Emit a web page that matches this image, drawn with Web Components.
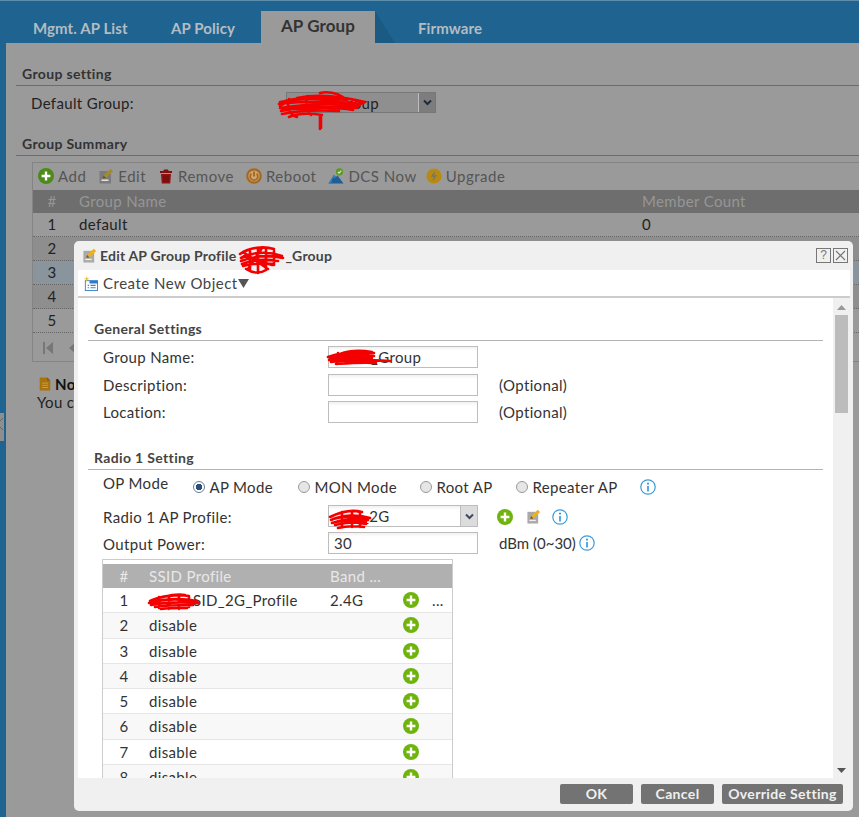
<!DOCTYPE html>
<html>
<head>
<meta charset="utf-8">
<title>AP Group</title>
<style>
	html, body { margin: 0; padding: 0; }
	body { font: 15px/20px Lato, "Open Sans", sans-serif; letter-spacing: .35px; color: #333; }
</style>
</head>
<body>
<ap-page>
	<ap-tabs></ap-tabs>
	<ap-panel>
		<ap-heading dim style="margin-top:21px">Group setting</ap-heading>
		<ap-default-group></ap-default-group>
		<ap-heading dim style="margin-top:15px">Group Summary</ap-heading>
		<ap-summary></ap-summary>
		<ap-note></ap-note>
	</ap-panel>

	<ap-modal title-a="Edit AP Group Profile" title-b="_Group">
		<ap-heading style="margin-top:22px">General Settings</ap-heading>
		<ap-form-row label="Group Name:" top="5"><ap-field pad="37">_Group</ap-field></ap-form-row>
		<ap-form-row label="Description:" top="6"><ap-field></ap-field><span slot="after">(Optional)</span></ap-form-row>
		<ap-form-row label="Location:" top="5"><ap-field></ap-field><span slot="after">(Optional)</span></ap-form-row>
		<ap-heading style="margin-top:26px">Radio 1 Setting</ap-heading>
		<ap-op-mode></ap-op-mode>
		<ap-form-row label="Radio 1 AP Profile:" top="7" shift="2">
			<ap-field select pad="28">_2G</ap-field>
			<span slot="after" style="display:flex;align-items:center;gap:13px;margin:1px 0 0 19px"><ap-icon name="plus" size="16"></ap-icon><ap-icon name="edit" size="15"></ap-icon><ap-icon name="info" size="16" style="margin-left:-2px"></ap-icon></span>
		</ap-form-row>
		<ap-form-row label="Output Power:" top="5" shift="1">
			<ap-field>30</ap-field>
			<span slot="after" style="display:flex;align-items:center;gap:3px;letter-spacing:0">dBm (0~30)<ap-icon name="info" size="16"></ap-icon></span>
		</ap-form-row>
		<ap-ssid-table></ap-ssid-table>
	</ap-modal>

	<ap-scribble x="277" y="88" w="90" h="42" d="M3 17C15 9 34 5 60 8M3 13C20 10 40 8 62 13C74 15 86 15 88 13C70 9 45 4 20 9M2 15C25 12 60 12 84 15M3 19C30 15 60 14 82 17M4 22C25 18 55 17 80 19M5 25C25 21 42 21 62 22M12 28C22 24 32 24 45 26M43 4C50 2 60 4 66 8M43 26V40M12 10C10 18 12 26 20 28M30 7C28 16 30 22 34 26M5 21C30 19 60 18 76 21M8 12C30 7 50 9 70 11M44 26V39"></ap-scribble>
	<ap-scribble x="238" y="244" w="48" h="31" d="M2 9C12 2 26 1 36 4M3 13C14 7 30 6 44 11M3 16C16 11 32 10 45 13M4 19C14 15 28 14 40 16M5 21C12 19 24 18 36 19M8 24C14 28 22 29 28 25M12 6V26M20 4V28M28 3V25M36 6V20M5 7L30 24M6 11L34 20M24 3L10 24"></ap-scribble>
	<ap-scribble x="326" y="347" w="66" h="19" d="M2 9C14 5 30 3 48 5M3 12C18 8 34 7 46 9M5 14C22 11 44 12 64 13M10 16C24 15 36 14 50 15M14 6C22 3 34 2 46 4M4 10C20 6 36 6 48 8M8 12C22 10 34 10 46 11M12 5V15M22 4V15M32 4V15M42 4V15"></ap-scribble>
	<ap-scribble x="328" y="506" w="44" h="23" d="M2 10C12 5 24 2 34 5M3 13C14 8 30 7 42 11M4 16C16 12 30 11 40 13M7 18C18 15 30 15 38 17M10 21C18 19 28 19 36 20M9 7C18 4 26 3 32 5M5 12C16 9 28 9 38 11M8 15C18 13 28 13 38 15M14 5V20M24 4V20M32 5V20"></ap-scribble>
	<ap-scribble x="147" y="591" w="54" h="20" d="M3 9C14 4 30 2 42 4M2 11C16 7 34 6 50 9M4 13C18 10 36 10 52 11M8 15C20 13 34 13 46 13M14 17C22 16 32 16 40 16M16 5C24 3 32 2 38 3M5 10C18 7 34 7 46 9M12 5V16M22 4V17M32 4V17M42 5V15"></ap-scribble>
</ap-page>

<script>
// icon set, all drawn on a 16x16 box
const ICONS = {
	plus: `<circle cx="8" cy="8" r="8" fill="var(--plus,#6fb30d)"/><path d="M8 3.6v8.8M3.6 8h8.8" stroke="#fff" stroke-width="2.4"/>`,
	edit: `<rect x="1.5" y="3" width="11.5" height="12.5" fill="var(--edit,#a9a9a9)"/><rect x="3.5" y="11.5" width="7" height="1.4" fill="#eee"/><path d="M4.5 10.5l1-3L12.5.8l2.6 2.4L8 10z" fill="var(--pencil,#eeb11c)"/><path d="M4.5 10.5l1-3 2.5 2.5z" fill="#555"/>`,
	trash: `<path d="M6 1.5h4l.6 1.5H14v2H2V3h3.4z" fill="#7c1111"/><path d="M3 6h10l-.8 9.5H3.8z" fill="#8e1212"/><path d="M6 7.5v6.5M8 7.5v6.5M10 7.5v6.5" stroke="#5f0c0c" stroke-width=".8"/>`,
	power: `<circle cx="8" cy="8" r="7.8" fill="#a8681c"/><circle cx="8" cy="8" r="5.6" fill="#c8a77a"/><path d="M5.4 5.6a3.8 3.8 0 1 0 5.2 0" fill="none" stroke="#a8681c" stroke-width="1.7"/><path d="M8 3.4v5" stroke="#a8681c" stroke-width="1.9"/>`,
	dcs: `<path d="M.5 15.5L6 7l2 2 1.5-1.5 6 8z" fill="#1d5f96"/><path d="M6 7l2 2-1.5 1.5L5 9.5 3 15.5H.5z" fill="#2f80bd"/><circle cx="11.5" cy="3.8" r="3.6" fill="#5c9a22"/><path d="M9.8 3.8l1.3 1.3 2.2-2.4" fill="none" stroke="#d8e8c8" stroke-width="1.1"/>`,
	bolt: `<circle cx="8" cy="8" r="7.6" fill="#b88a14"/><path d="M9.2 2.6L4.8 8.8h2.8L6.6 13.4l4.6-6.4H8.3z" fill="#6f7a70"/>`,
	info: `<circle cx="8" cy="8" r="7.2" fill="none" stroke="#3b9bd8" stroke-width="1.2"/><circle cx="8" cy="4.6" r="1.1" fill="#3b9bd8"/><path d="M8 7v5.4" stroke="#3b9bd8" stroke-width="1.7"/>`,
	note: `<path d="M2 .5h8.5L14 4v11.5H2z" fill="#a8720d"/><path d="M10.5.5V4H14z" fill="#6e5a36"/><path d="M4.5 7h7M4.5 9.5h7M4.5 12h7" stroke="#c9a35a" stroke-width="1"/>`,
	create: `<rect x="2.5" y="5" width="13" height="10.5" fill="#fff" stroke="#3c83c8"/><rect x="7" y="5" width="8.5" height="3" fill="#2b78d0"/><path d="M5 10h1.5M5 12.5h1.5M8 10h5.5M8 12.5h5.5" stroke="#3c83c8" stroke-width="1.2"/><path d="M4 0l.8 2.4L7.2 3l-2.4.8L4 6.4 3.2 3.8.8 3l2.4-.6z" fill="#e5c33b"/>`
};

class ApIcon extends HTMLElement {
	connectedCallback() {
		const size = this.getAttribute('size') || 16;
		this.attachShadow({ mode: 'open' }).innerHTML = `
			<style>:host { display: inline-flex; flex: none; } svg { display: block; }</style>
			<svg width="${size}" height="${size}" viewBox="0 0 16 16">${ICONS[this.getAttribute('name')] || ''}</svg>`;
	}
}
customElements.define('ap-icon', ApIcon);

class ApPage extends HTMLElement {
	constructor() {
		super();
		this.attachShadow({ mode: 'open' }).innerHTML = `
			<style>
				:host { display: flex; flex-direction: column; position: relative; width: 859px; height: 817px; overflow: hidden; background: #1f6490; border-top: 1px solid #5e8dab; box-sizing: border-box; }
			</style>
			<slot></slot>`;
	}
}
customElements.define('ap-page', ApPage);

class ApTabs extends HTMLElement {
	constructor() {
		super();
		this.attachShadow({ mode: 'open' }).innerHTML = `
			<style>
				:host { display: flex; height: 42px; box-sizing: border-box; padding: 10px 0 0 33px; font-weight: 700; font-size: 15px; letter-spacing: .1px; color: #b4bcc2; flex: none; }
				span { line-height: 32px; padding-top: 1px; white-space: nowrap; }
				.on { background: #9a9a9a; color: #333; font-size: 17px; width: 114px; text-align: center; margin-left: 23px; padding: 0; line-height: 30px; }
				.fold { width: 0; height: 0; border-bottom: 32px solid #1b5a83; border-right: 20px solid transparent; padding: 0; }
			</style>
			<span style="width:138px">Mgmt. AP List</span>
			<span style="width:67px">AP Policy</span>
			<span class="on">AP Group</span>
			<span class="fold"></span>
			<span style="margin-left:23px">Firmware</span>`;
	}
}
customElements.define('ap-tabs', ApTabs);

class ApPanel extends HTMLElement {
	constructor() {
		super();
		this.attachShadow({ mode: 'open' }).innerHTML = `
			<style>
				:host { display: block; flex: 1; margin-left: 6px; padding-left: 10px; background: #9a9a9a; border-top: 1px solid #8aa0ae; }
				.handle { position: absolute; left: 0; top: 412px; width: 4px; height: 28px; background: #8e8e8e; }
			</style>
			<slot></slot>
			<div class="handle"><svg width="4" height="28"><path d="M0 8l3-3M0 14l3 3" stroke="#666" fill="none"/></svg></div>`;
	}
}
customElements.define('ap-panel', ApPanel);

class ApHeading extends HTMLElement {
	constructor() {
		super();
		this.attachShadow({ mode: 'open' }).innerHTML = `
			<style>
				:host { display: block; height: 20px; box-sizing: content-box; padding-left: 6px; font-weight: 700; font-size: 14px; line-height: 18px; color: #444; border-bottom: 1px solid #b4b4b4; }
				:host([dim]) { color: #333; border-bottom-color: #6c6c6c; }
			</style>
			<slot></slot>`;
	}
}
customElements.define('ap-heading', ApHeading);

class ApField extends HTMLElement {
	connectedCallback() {
		const pad = this.getAttribute('pad') || 0;
		this.attachShadow({ mode: 'open' }).innerHTML = `
			<style>
				:host { display: flex; box-sizing: border-box; position: relative; width: var(--w, 150px); height: var(--h, 22px); padding-left: 5px; border: 1px solid #bdbdbd; background: linear-gradient(#f1f1f1, #fff 4px); line-height: 20px; font-size: 15px; color: #333; }
				.t { padding-left: ${pad}px; white-space: nowrap; }
				.arrow { position: absolute; right: 0; top: 0; bottom: 0; width: 16px; background: var(--arrow-bg, #dcdcdc); border-left: 1px solid #bdbdbd; display: flex; align-items: center; justify-content: center; }
			</style>
			<div class="t"><slot></slot></div>
			${this.hasAttribute('select') ? `<div class="arrow"><svg width="9" height="7" viewBox="0 0 9 7"><path d="M1 1.5l3.5 3.5L8 1.5" fill="none" stroke="var(--arrow, #3e4a5c)" stroke-width="2"/></svg></div>` : ''}`;
	}
}
customElements.define('ap-field', ApField);

class ApDefaultGroup extends HTMLElement {
	constructor() {
		super();
		this.attachShadow({ mode: 'open' }).innerHTML = `
			<style>
				:host { display: grid; grid-template-columns: 255px 150px; align-items: center; height: 34px; padding-left: 15px; color: #222; }
				ap-field { --h: 21px; --arrow-bg: #7d7d7d; --arrow: #1f2a3c; border-color: #777; background: #8f8f8f; color: #222; margin-top: -1px; }
			</style>
			<div>Default Group:</div>
			<ap-field select pad="44">Group</ap-field>`;
	}
}
customElements.define('ap-default-group', ApDefaultGroup);

// table in the dimmed page behind the dialog
class ApSummary extends HTMLElement {
	constructor() {
		super();
		const rows = [['1', 'default', '0', '#9a9a9a'], ['2', '', '', '#8e8e8e'], ['3', '', '', '#8a949c'], ['4', '', '', '#8e8e8e'], ['5', '', '', '#9a9a9a']];
		this.attachShadow({ mode: 'open' }).innerHTML = `
			<style>
				:host { display: block; margin: 6px 0 0 16px; height: 200px; border: 1px solid #848484; border-right: 0; box-sizing: border-box; --plus: #4c8a1a; --edit: #7b7b7b; --pencil: #a58a2a; color: #555; }
				.bar { display: flex; align-items: center; height: 27px; padding: 0 0 2px 5px; box-sizing: border-box; font-size: 15px; letter-spacing: .5px; }
				.bar span { display: flex; align-items: center; gap: 4px; margin-right: 12px; white-space: nowrap; }
				.bar span:nth-child(5) { margin-right: 9px; }
				.row { display: grid; grid-template-columns: 46px 563px 1fr; height: 24px; line-height: 23px; color: #222; border-bottom: 1px dotted #666; box-sizing: border-box; }
				.row div:first-child { text-align: center; padding-right: 8px; }
				.head { background: #6e6e6e; color: #969696; height: 23px; border: 0; }
				.pager { display: flex; gap: 14px; align-items: center; height: 30px; padding-left: 9px; }
			</style>
			<div class="bar">
				<span><ap-icon name="plus"></ap-icon>Add</span>
				<span><ap-icon name="edit"></ap-icon>Edit</span>
				<span><ap-icon name="trash"></ap-icon>Remove</span>
				<span><ap-icon name="power"></ap-icon>Reboot</span>
				<span><ap-icon name="dcs"></ap-icon>DCS Now</span>
				<span><ap-icon name="bolt"></ap-icon>Upgrade</span>
			</div>
			<div class="row head"><div>#</div><div>Group Name</div><div>Member Count</div></div>
			${rows.map(r => `<div class="row" style="background:${r[3]}"><div>${r[0]}</div><div>${r[1]}</div><div>${r[2]}</div></div>`).join('')}
			<div class="pager">
				<svg width="12" height="14" viewBox="0 0 12 14"><path d="M1 1h2v12H1zM11 1v12L4 7z" fill="#777"/></svg>
				<svg width="8" height="14" viewBox="0 0 8 14"><path d="M8 1v12L1 7z" fill="#777"/></svg>
			</div>`;
	}
}
customElements.define('ap-summary', ApSummary);

class ApNote extends HTMLElement {
	constructor() {
		super();
		this.attachShadow({ mode: 'open' }).innerHTML = `
			<style>
				:host { display: block; margin: 14px 0 0 21px; color: #222; line-height: 16px; }
				b { display: flex; align-items: center; gap: 3px; margin: 0 0 2px 1px; color: #111; }
			</style>
			<b><ap-icon name="note" size="14"></ap-icon>Note</b>
			<div>You can</div>`;
	}
}
customElements.define('ap-note', ApNote);

class ApModal extends HTMLElement {
	connectedCallback() {
		this.attachShadow({ mode: 'open' }).innerHTML = `
			<style>
				:host { position: absolute; left: 74px; top: 240px; width: 779px; height: 570px; display: flex; flex-direction: column; background: #f0f0f0; border-radius: 5px; }
				.title { display: flex; align-items: center; height: 29px; flex: none; padding: 0 5px 0 8px; font-weight: 700; font-size: 14px; letter-spacing: .2px; color: #444; gap: 3px; }
				.gap { width: 46px; }
				.title .x { display: flex; gap: 2px; margin-left: auto; }
				.x span { width: 13px; height: 13px; border: 1px solid #777; color: #777; font: 12px/13px "Liberation Sans", sans-serif; text-align: center; letter-spacing: 0; }
				.x svg { display: block; }
				.tool { display: flex; align-items: center; gap: 5px; height: 26px; flex: none; margin: 0 3px 0 4px; padding-left: 5px; background: #fff; border-bottom: 2px solid #ccc; color: #444; letter-spacing: .5px; }
				.tool svg.down { margin-left: -5px; }
				.mid { flex: 1; display: flex; min-height: 0; margin-left: 4px; }
				.body { width: 755px; background: #fff; padding: 0 10px; box-sizing: border-box; overflow: hidden; color: #333; }
				.bar { width: 17px; position: relative; }
				.thumb { position: absolute; left: 2px; right: 2px; top: 17px; height: 98px; background: #bcbcbc; }
				.bar svg { position: absolute; left: 4px; }
				.foot { display: flex; justify-content: flex-end; gap: 8px; height: 33px; flex: none; padding: 6px 10px 0 0; box-sizing: border-box; }
				.foot span { height: 20px; background: #737373; color: #f0f0f0; border-radius: 2px; font-weight: 700; font-size: 14px; line-height: 20px; text-align: center; }
			</style>
			<div class="title">
				<ap-icon name="edit" size="15"></ap-icon>
				<span>${this.getAttribute('title-a')}</span><span class="gap"></span><span style="margin-left:-3px">${this.getAttribute('title-b')}</span>
				<div class="x"><span>?</span><span><svg width="13" height="13"><path d="M2 2l9 9M11 2l-9 9" stroke="#777" stroke-width="1.2"/></svg></span></div>
			</div>
			<div class="tool"><ap-icon name="create" size="15"></ap-icon><span>Create New Object</span><svg class="down" width="11" height="9"><path d="M0 0h11L5.5 9z" fill="#555"/></svg></div>
			<div class="mid">
				<div class="body"><slot></slot></div>
				<div class="bar">
					<svg width="9" height="5" style="top:7px"><path d="M0 5l4.5-5L9 5z" fill="#999"/></svg>
					<div class="thumb"></div>
					<svg width="9" height="5" style="top:470px"><path d="M0 0l4.5 5L9 0z" fill="#555"/></svg>
				</div>
			</div>
			<div class="foot"><span style="width:73px">OK</span><span style="width:73px">Cancel</span><span style="width:121px">Override Setting</span></div>`;
	}
}
customElements.define('ap-modal', ApModal);

class ApFormRow extends HTMLElement {
	connectedCallback() {
		this.attachShadow({ mode: 'open' }).innerHTML = `
			<style>
				:host { display: grid; grid-template-columns: 225px 150px auto; align-items: center; justify-content: start; margin-top: ${this.getAttribute('top') || 0}px; padding-left: 15px; height: 22px; }
				.label { padding-top: ${this.getAttribute('shift') || 0}px; }
				::slotted([slot=after]) { margin-left: 21px; }
			</style>
			<div class="label">${this.getAttribute('label')}</div>
			<slot></slot>
			<slot name="after"></slot>`;
	}
}
customElements.define('ap-form-row', ApFormRow);

class ApRadio extends HTMLElement {
	constructor() {
		super();
		this.attachShadow({ mode: 'open' }).innerHTML = `
			<style>
				:host { display: inline-flex; align-items: center; gap: 4px; white-space: nowrap; }
				.r { width: 12px; height: 12px; box-sizing: border-box; border: 1px solid #9a9a9a; border-radius: 50%; background: #e6e6e6; display: block; }
				:host([checked]) .r { border-color: #6b7f96; background: radial-gradient(circle, #25507f 0 3px, #fff 3.5px); }
			</style>
			<span class="r"></span><slot></slot>`;
	}
}
customElements.define('ap-radio', ApRadio);

class ApOpMode extends HTMLElement {
	constructor() {
		super();
		this.attachShadow({ mode: 'open' }).innerHTML = `
			<style>
				:host { display: flex; align-items: flex-start; margin-top: 3px; padding-left: 15px; height: 25px; }
				.modes { display: grid; grid-template-columns: 105px 122px 96px 118px auto; align-items: center; margin-top: 4px; margin-left: 25px; }
				ap-icon { margin-left: 6px; }
			</style>
			<div>OP Mode</div>
			<div class="modes">
				<ap-radio checked>AP Mode</ap-radio>
				<ap-radio>MON Mode</ap-radio>
				<ap-radio>Root AP</ap-radio>
				<ap-radio>Repeater AP</ap-radio>
				<ap-icon name="info"></ap-icon>
			</div>`;
	}
}
customElements.define('ap-op-mode', ApOpMode);

class ApSsidTable extends HTMLElement {
	constructor() {
		super();
		let rows = '';
		for (let i = 1; i <= 8; i++) {
			rows += `<div class="row${i % 2 ? '' : ' alt'}">
				<div class="n">${i}</div>
				<div>${i === 1 ? '<span style="padding-left:44px">SID_2G_Profile</span>' : 'disable'}</div>
				<div>${i === 1 ? '2.4G' : ''}</div>
				<div class="add"><ap-icon name="plus"></ap-icon></div>
				<div>${i === 1 ? '...' : ''}</div>
			</div>`;
		}
		this.attachShadow({ mode: 'open' }).innerHTML = `
			<style>
				:host { display: block; width: 351px; box-sizing: border-box; margin: 5px 0 0 14px; padding-top: 4px; border: 1px solid #ccc; border-bottom: 0; }
				.row { display: grid; grid-template-columns: 46px 181px 73px 29px 1fr; align-items: center; height: 25.25px; box-sizing: border-box; border-bottom: 1px solid #e6e6e6; white-space: nowrap; overflow: hidden; }
				.alt { background: #f8f8f8; }
				.n { text-align: center; padding-right: 4px; }
				.add { display: flex; }
				.head { background: #b0b0b0; color: #e8e8e8; height: 24px; border: 0; }
			</style>
			<div class="row head"><div class="n">#</div><div>SSID Profile</div><div>Band ...</div><div></div><div></div></div>
			${rows}`;
	}
}
customElements.define('ap-ssid-table', ApSsidTable);

// red marker strokes over the redacted names
class ApScribble extends HTMLElement {
	connectedCallback() {
		const a = n => this.getAttribute(n);
		this.attachShadow({ mode: 'open' }).innerHTML = `
			<style>:host { position: absolute; left: ${a('x')}px; top: ${a('y')}px; } svg { display: block; }</style>
			<svg width="${a('w')}" height="${a('h')}" fill="none" stroke="#f40000" stroke-width="2.6" stroke-linecap="round"><path d="${a('d')}"/></svg>`;
	}
}
customElements.define('ap-scribble', ApScribble);
</script>
</body>
</html>
